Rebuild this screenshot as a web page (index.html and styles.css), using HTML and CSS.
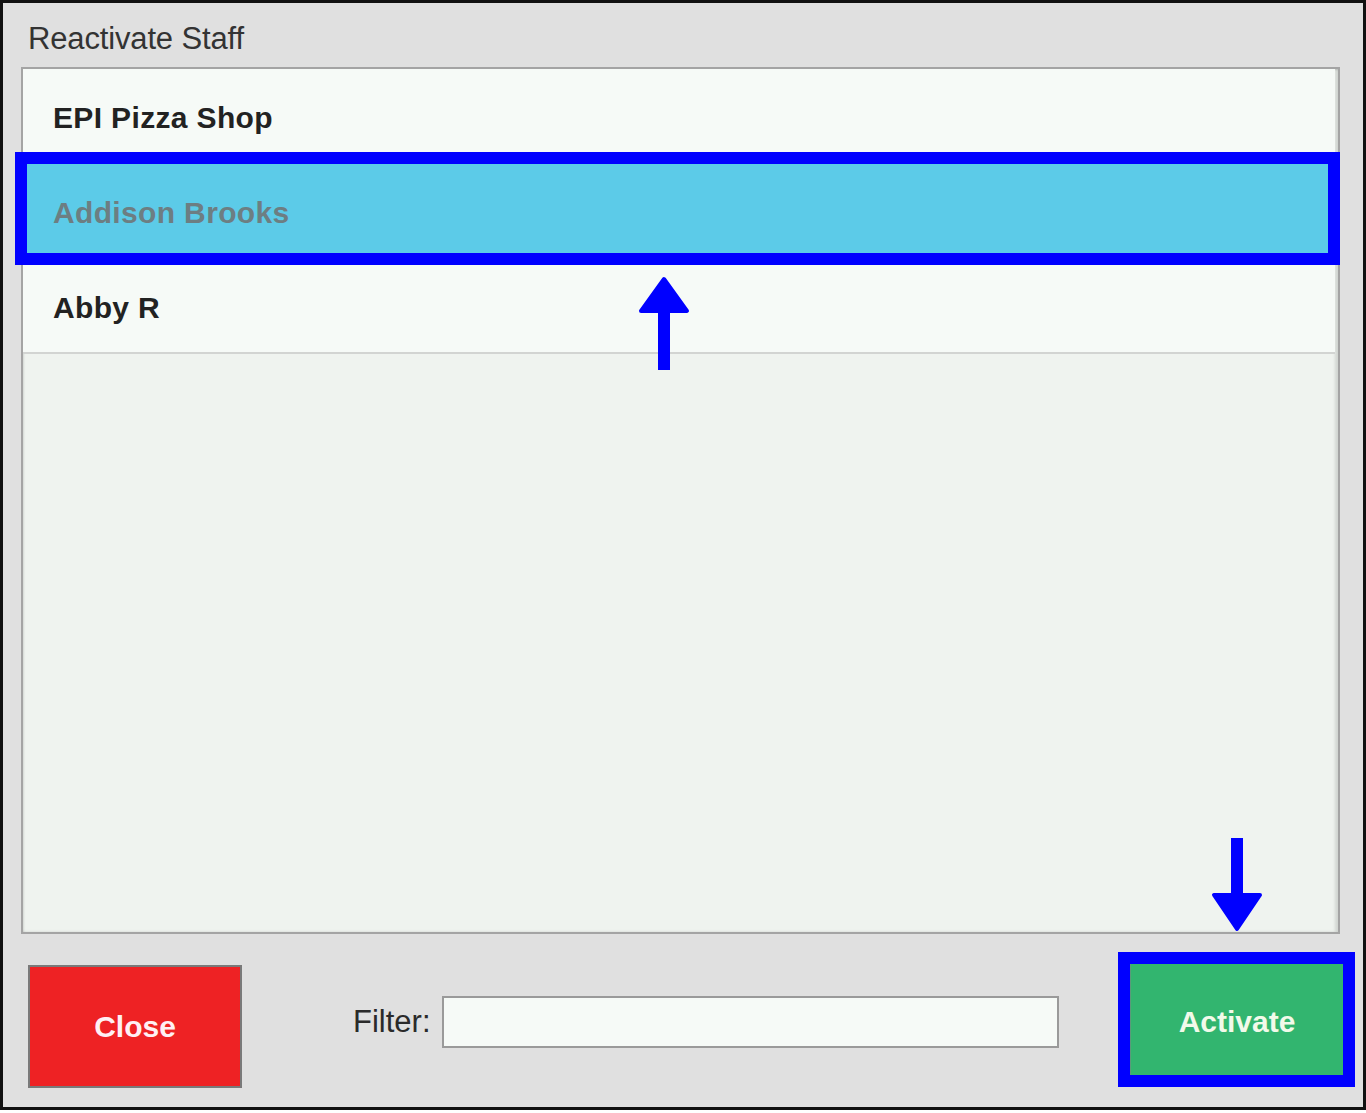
FILE: index.html
```html
<!DOCTYPE html>
<html lang="en">
<head>
<meta charset="utf-8">
<title>Reactivate Staff</title>
<link rel="stylesheet" href="styles.css">
</head>
<body>
<div class="frame">
  <div class="title">Reactivate Staff</div>
  <div class="list">
    <div class="row">EPI Pizza Shop</div>
    <div class="row selected">Addison Brooks</div>
    <div class="row last">Abby R</div>
  </div>
  <div class="bottom">
    <button class="btn close">Close</button>
    <div class="filter">
      <label class="filter-label" for="f">Filter:</label>
      <input class="filter-input" id="f" type="text">
    </div>
    <button class="btn activate">Activate</button>
  </div>

  <div class="mark mark-row"></div>
  <div class="mark mark-btn"></div>
  <svg class="arrows" viewBox="3 3 1360 1104" width="1360" height="1104">
    <polygon points="664,279 687,311 641,311" fill="#0000ff" stroke="#0000ff" stroke-width="4" stroke-linejoin="round"/>
    <rect x="658" y="310" width="12" height="60" fill="#0000ff"/>
    <rect x="1231" y="838" width="12" height="58" fill="#0000ff"/>
    <polygon points="1214,895 1260,895 1237,929" fill="#0000ff" stroke="#0000ff" stroke-width="4" stroke-linejoin="round"/>
  </svg>
</div>
</body>
</html>
```
FILE: styles.css
```css
* { box-sizing: border-box; }

html, body {
  margin: 0;
  padding: 0;
  background: #ffffff;
}

body {
  font-family: "Liberation Sans", Arial, sans-serif;
  width: 1366px;
  height: 1113px;
  overflow: hidden;
}

.frame {
  position: relative;
  width: 1366px;
  height: 1110px;
  border: 3px solid #111111;
  background: #e0e0e0;
  padding: 18px 23px 19px 18px;
  display: flex;
  flex-direction: column;
}

.title {
  font-size: 31px;
  line-height: 36px;
  height: 36px;
  color: #333333;
  letter-spacing: -0.15px;
  padding-left: 7px;
  margin-bottom: 10px;
}

.list {
  height: 867px;
  border: 2px solid #a4a4a4;
  background: #eff3ef;
  box-shadow: inset 1px 1px 2px rgba(0,0,0,0.12), inset -3px 0 3px rgba(0,0,0,0.12);
  display: flex;
  flex-direction: column;
  padding-right: 3px;
}

.row {
  height: 95px;
  display: flex;
  align-items: center;
  padding-left: 30px;
  padding-top: 3px;
  background: #f6faf7;
  font-size: 30px;
  font-weight: bold;
  letter-spacing: 0.35px;
  color: #222222;
}

.row.selected {
  background: #5ccbe8;
  color: #6d7e82;
}

.row.last {
  border-bottom: 2px solid #d2d4d2;
  padding-top: 5px;
}

.bottom {
  margin-top: 31px;
  margin-right: -3px;
  height: 123px;
  display: flex;
  align-items: center;
}

.bottom > * { flex-shrink: 0; }

.btn {
  font-family: "Liberation Sans", Arial, sans-serif;
  font-size: 30px;
  font-weight: bold;
  cursor: pointer;
  padding: 0;
}

.close {
  margin-left: 7px;
  width: 214px;
  height: 123px;
  background: #ee2224;
  border: 2px solid #7a7a7a;
  color: #fff0f4;
}

.filter {
  margin-left: 110px;
  margin-bottom: 9px;
  display: flex;
  align-items: center;
}

.filter-label {
  font-size: 31px;
  color: #2a2a2a;
  width: 90px;
  padding-left: 1px;
}

.filter-input {
  width: 617px;
  height: 52px;
  border: 2px solid #9a9a9a;
  background: #f6faf7;
  font-size: 24px;
  outline: none;
}

.activate {
  margin-left: 71px;
  margin-bottom: 9px;
  width: 213px;
  height: 116px;
  background: #32b56f;
  border: none;
  border-left: 1px solid #5a9a7a;
  color: #f2faea;
}

.mark {
  position: absolute;
  border: 12px solid #0000ff;
  pointer-events: none;
}

.mark-row {
  left: 12px;
  top: 149px;
  width: 1325px;
  height: 113px;
}

.mark-btn {
  left: 1115px;
  top: 949px;
  width: 237px;
  height: 135px;
}

.arrows {
  position: absolute;
  left: 0;
  top: 0;
  pointer-events: none;
}
```
